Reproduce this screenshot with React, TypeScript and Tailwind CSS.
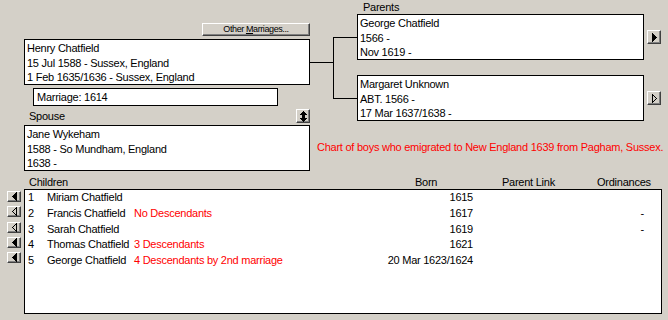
import React from 'react';

const children = [
  { n: 1, name: 'Miriam Chatfield', note: '', born: '1615', ord: '', filled: true },
  { n: 2, name: 'Francis Chatfield', note: 'No Descendants', born: '1617', ord: '-', filled: false },
  { n: 3, name: 'Sarah Chatfield', note: '', born: '1619', ord: '-', filled: false },
  { n: 4, name: 'Thomas Chatfield', note: '3 Descendants', born: '1621', ord: '', filled: true },
  { n: 5, name: 'George Chatfield', note: '4 Descendants by 2nd marriage', born: '20 Mar 1623/1624', ord: '', filled: true },
];

const Btn: React.FC<{ className?: string; children?: React.ReactNode }> = ({ className = '', children }) => (
  <div
    className={`flex items-center justify-center shrink-0 bg-[#d4d0c8] border border-t-white border-l-white border-r-[#404040] border-b-[#404040] shadow-[inset_-1px_-1px_0_#808080] ${className}`}
  >
    {children}
  </div>
);

const Arrow: React.FC<{ dir: 'left' | 'right'; filled: boolean }> = ({ dir, filled }) => {
  const pts = dir === 'right' ? '0.5,0.5 4.5,4.5 0.5,8.5' : '4.5,0.5 0.5,4.5 4.5,8.5';
  return (
    <svg width="5" height="9" viewBox="0 0 5 9" shapeRendering="crispEdges">
      <polygon points={pts} fill={filled ? '#000' : 'none'} stroke="#000" strokeWidth="1" />
    </svg>
  );
};

// up/down arrow glyph drawn pixel by pixel
const UpDown = () => {
  const rows: [number, number, number][] = [
    [0, 3, 1],
    [1, 2, 3],
    [2, 1, 5],
    [3, 0, 7],
    [4, 2, 3],
    [5, 2, 3],
    [6, 2, 3],
    [7, 0, 7],
    [8, 1, 5],
    [9, 2, 3],
    [10, 3, 1],
  ];
  return (
    <svg width="7" height="11" viewBox="0 0 7 11" shapeRendering="crispEdges">
      {rows.map(([y, x, w]) => (
        <rect key={y} x={x} y={y} width={w} height="1" fill="#000" />
      ))}
    </svg>
  );
};

const PersonBox: React.FC<{ lines: string[]; className?: string }> = ({ lines, className = '' }) => (
  <div className={`border border-black bg-white pl-[2px] pt-[1px] leading-[14.5px] ${className}`}>
    {lines.map((l) => (
      <div key={l} className="whitespace-nowrap">{l}</div>
    ))}
  </div>
);

export default function App() {
  return (
    <div className="w-[668px] h-[320px] overflow-hidden bg-[#d4d0c8] font-['Liberation_Sans',Arial,sans-serif] text-[11px] tracking-[-0.25px] text-black">
      <div className="flex">
        {/* individual + spouse */}
        <div className="ml-[24px] w-[286px] shrink-0 flex flex-col pt-[23px]">
          <div className="flex justify-end">
            <Btn className="w-[108px] h-[13px] text-[9px] tracking-[-0.4px] leading-[11px]">
              <span className="whitespace-pre">
                Other <span className="underline">M</span>arriages...
              </span>
            </Btn>
          </div>
          <PersonBox
            className="mt-[3px] h-[46px]"
            lines={['Henry Chatfield', '15 Jul 1588 - Sussex, England', '1 Feb 1635/1636 - Sussex, England']}
          />
          <div className="ml-[9px] mt-[3px] w-[245px] h-[18px] border border-black bg-white pl-[3px] leading-[16px]">
            Marriage: 1614
          </div>
          <div className="mt-[3px] h-[14px] flex items-center justify-between">
            <span className="pl-[5px] leading-[14px]">Spouse</span>
            <Btn className="w-[14px] h-[14px]">
              <UpDown />
            </Btn>
          </div>
          <PersonBox
            className="mt-[2px] h-[46px]"
            lines={['Jane Wykeham', '1588 - So Mundham, England', '1638 -']}
          />
        </div>

        {/* parents */}
        <div className="flex flex-col">
          <div className="flex">
            <svg width="47" height="121" className="shrink-0" shapeRendering="crispEdges">
              <line x1="0" y1="62.5" x2="23" y2="62.5" stroke="#000" />
              <line x1="23.5" y1="37" x2="23.5" y2="99" stroke="#000" />
              <line x1="23" y1="37.5" x2="47" y2="37.5" stroke="#000" />
              <line x1="23" y1="98.5" x2="47" y2="98.5" stroke="#000" />
            </svg>
            <div className="flex flex-col">
              <div className="h-[14px] pl-[6px] leading-[14px]">Parents</div>
              <div className="flex items-center">
                <PersonBox className="w-[287px] h-[46px]" lines={['George Chatfield', '1566 -', 'Nov 1619 -']} />
                <Btn className="ml-[3px] w-[14px] h-[14px]">
                  <Arrow dir="right" filled />
                </Btn>
              </div>
              <div className="mt-[15px] flex items-center">
                <PersonBox className="w-[287px] h-[46px]" lines={['Margaret Unknown', 'ABT. 1566 -', '17 Mar 1637/1638 -']} />
                <Btn className="ml-[3px] w-[14px] h-[14px]">
                  <Arrow dir="right" filled={false} />
                </Btn>
              </div>
            </div>
          </div>
          <div className="pl-[7px] mt-[19px] leading-[14px] whitespace-nowrap text-[#ff0000]">
            Chart of boys who emigrated to New England 1639 from Pagham, Sussex.
          </div>
        </div>
      </div>

      {/* children */}
      <div className="mt-[5px] flex h-[13px] leading-[13px]">
        <span className="w-[415px] pl-[29px]">Children</span>
        <span className="w-[87px]">Born</span>
        <span className="w-[95px]">Parent Link</span>
        <span>Ordinances</span>
      </div>
      <div className="flex">
        <div className="w-[24px] pl-[7px] pt-[2px] flex flex-col gap-[4.25px]">
          {children.map((c) => (
            <Btn key={c.n} className="w-[14px] h-[11px]">
              <Arrow dir="left" filled={c.filled} />
            </Btn>
          ))}
        </div>
        <div className="w-[638px] h-[125px] border border-black bg-white">
          {children.map((c) => (
            <div key={c.n} className="flex h-[15.75px] leading-[15.75px] pl-[3px] whitespace-nowrap">
              <span className="w-[19px]">{c.n}</span>
              <span className="w-[87px]">{c.name}</span>
              <span className="w-[239px] text-[#ff0000]">{c.note}</span>
              <span className="w-[100px] text-right">{c.born}</span>
              <span className="flex-1 text-right pr-[17px]">{c.ord}</span>
            </div>
          ))}
        </div>
      </div>
    </div>
  );
}
